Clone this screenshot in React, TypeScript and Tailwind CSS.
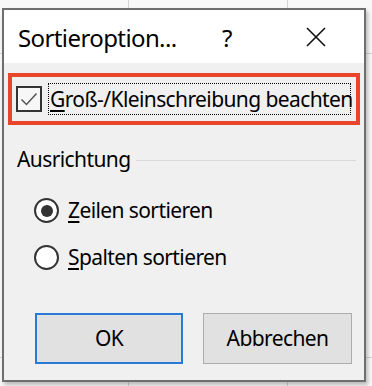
import React from "react";

export default function App() {
  const font = { fontFamily: '"Noto Sans", "Open Sans", sans-serif' };
  return (
    <div className="relative w-[372px] h-[386px] overflow-hidden bg-[#f8f8f8]" style={font}>
      {/* spreadsheet grid behind the dialog */}
      <div className="absolute left-0 top-[53px] w-[372px] h-px bg-[#d4d4d4]" />
      <div className="absolute left-0 top-[357px] w-[372px] h-px bg-[#d4d4d4]" />
      <div className="absolute left-[128px] top-0 w-px h-[386px] bg-[#d4d4d4]" />
      <div className="absolute left-[287px] top-0 w-px h-[386px] bg-[#d4d4d4]" />

      <div className="relative ml-[2px] mt-[8px] w-[364px] h-[374px] border-2 border-[#6e6e6e] bg-[#f0f0f0] flex flex-col shadow-[2px_3px_4px_rgba(0,0,0,0.25)]">
        {/* title bar */}
        <div className="h-[53px] bg-white flex items-center text-black">
          <div className="pl-[14px] text-[24px] tracking-[-0.6px] leading-none w-[200px] pt-[2px]">Sortieroption...</div>
          <div className="ml-[18px] text-[24px] leading-none pt-[2px]">?</div>
          <svg className="ml-[74px]" width="20" height="20" viewBox="0 0 20 20">
            <path d="M1 1 L19 19 M19 1 L1 19" stroke="#111" strokeWidth="1.6" fill="none" />
          </svg>
        </div>

        {/* body */}
        <div className="flex-1 flex flex-col text-[21px] tracking-[-0.6px] text-black">
          <div className="ml-[4px] mt-[10px] w-[352px] h-[52px] border-[4px] border-[#e8452c] flex items-center">
            <div className="ml-[4px] w-[26px] h-[26px] border-2 border-[#333] bg-[#f7f7f7] flex items-center justify-center">
              <svg width="22" height="22" viewBox="0 0 22 22">
                <path d="M3.5 11.5 L8.5 16.5 L18.5 5.5" stroke="#555" strokeWidth="1.5" fill="none" />
              </svg>
            </div>
            <div className="ml-[6px] w-[303px] h-[32px] border border-dotted border-black flex items-center pl-[1px]">
              <span className="leading-none whitespace-nowrap">
                <u className="underline-offset-[3px]">G</u>roß-/Kleinschreibung beachten
              </span>
            </div>
          </div>

          <div className="mt-[24px] ml-[13px] flex items-center">
            <span className="leading-none">Ausrichtung</span>
            <div className="ml-[6px] w-[220px] h-px bg-[#d9d9d9] mt-[2px]" />
          </div>

          <div className="mt-[28px] ml-[30px] flex items-center">
            <div className="w-[25px] h-[25px] rounded-full border-2 border-[#333] bg-white flex items-center justify-center">
              <div className="w-[12px] h-[12px] rounded-full bg-[#333]" />
            </div>
            <span className="ml-[9px] leading-none">
              <u className="underline-offset-[3px]">Z</u>eilen sortieren
            </span>
          </div>

          <div className="mt-[22px] ml-[30px] flex items-center">
            <div className="w-[25px] h-[25px] rounded-full border-2 border-[#333] bg-white" />
            <span className="ml-[9px] leading-none">
              <u className="underline-offset-[3px]">S</u>palten sortieren
            </span>
          </div>

          <div className="mt-[43px] ml-[31px] flex gap-[20px]">
            <div className="w-[148px] h-[51px] border-2 border-[#2a79d4] bg-[#e1e1e1] flex items-center justify-center">
              OK
            </div>
            <div className="w-[149px] h-[51px] border border-[#adadad] bg-[#e1e1e1] flex items-center justify-center">
              Abbrechen
            </div>
          </div>
        </div>
      </div>
    </div>
  );
}
